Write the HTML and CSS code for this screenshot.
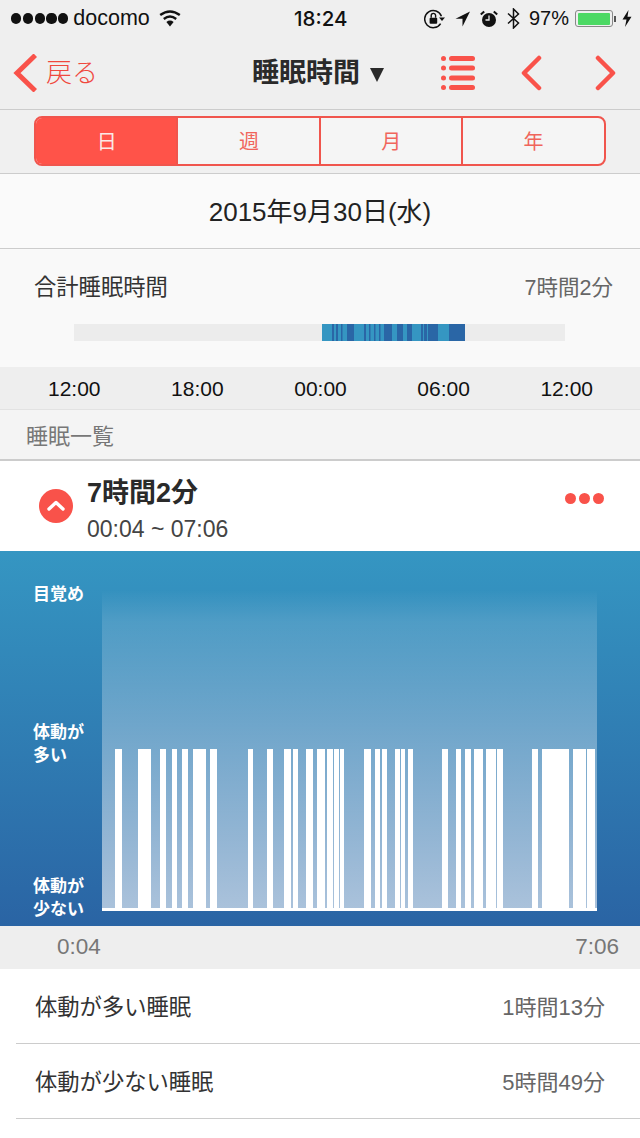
FILE: index.html
```html
<!DOCTYPE html>
<html lang="ja">
<head>
    <meta charset="UTF-8">
    <meta name="viewport" content="width=device-width, initial-scale=1.0">
    <title>睡眠時間</title>
    <link rel="stylesheet" href="styles.css">
</head>
<body>
    <div class="status-bar">
        <div class="status-left">
            <span class="signal"><i></i><i></i><i></i><i></i><i></i></span>
            <span class="carrier">docomo</span>
            <svg class="wifi" width="22" height="17" viewBox="0 0 22 17">
                <path d="M11 16.5 7.4 12Q11 9.2 14.6 12Z" fill="#111"/>
                <path d="M4.8 9Q11 4.2 17.2 9" fill="none" stroke="#111" stroke-width="2.4"/>
                <path d="M1.2 5Q11 -2.2 20.8 5" fill="none" stroke="#111" stroke-width="2.4"/>
            </svg>
        </div>
        <div class="status-time">18:24</div>
        <div class="status-right">
            <svg width="21" height="20" viewBox="0 0 21 20">
                <path d="M16.6 14.6A8.6 8.6 0 1 1 17.4 7.2" fill="none" stroke="#111" stroke-width="1.5"/>
                <path d="M15 8.6H21L18 12Z" fill="#111"/>
                <rect x="5.6" y="8.8" width="7.6" height="6" rx="1" fill="#111"/>
                <path d="M7.2 8.8V6.6A2.2 2.2 0 0 1 11.6 6.6V8.8" fill="none" stroke="#111" stroke-width="1.4"/>
            </svg>
            <svg class="gap-arrow" width="15" height="16" viewBox="0 0 15 16">
                <path d="M15 0.5 0.5 7.8H7.5V15.5Z" fill="#111"/>
            </svg>
            <svg class="gap-alarm" width="18" height="18" viewBox="0 0 18 18">
                <circle cx="9" cy="10" r="7" fill="#111"/>
                <path d="M9 5.5V10H5.5" fill="none" stroke="#efefef" stroke-width="1.3"/>
                <path d="M0.8 4.6 4.2 1.4M17.2 4.6 13.8 1.4" stroke="#111" stroke-width="2"/>
            </svg>
            <svg class="gap-bt" width="13" height="21" viewBox="0 0 13 21">
                <path d="M1 5.5 11.5 15 6.5 20V1L11.5 6 1 15.5" fill="none" stroke="#111" stroke-width="1.5"/>
            </svg>
            <span class="battery-pct">97%</span>
            <span class="battery"><span class="battery-fill"></span></span>
            <span class="battery-cap"></span>
            <svg class="gap-bolt" width="10" height="17" viewBox="0 0 10 17">
                <path d="M6.5 0 0.5 9.5H4.5L3 17 9.5 6.8H5.5Z" fill="#111"/>
            </svg>
        </div>
    </div>

    <div class="nav-bar">
        <div class="nav-back">
            <svg width="24" height="38" viewBox="0 0 24 38">
                <path d="M20.5 3 4 19 20.5 35" fill="none" stroke="#f9524a" stroke-width="5" stroke-linecap="square"/>
            </svg>
            <span>戻る</span>
        </div>
        <div class="nav-title"><span class="nav-title-text">睡眠時間</span><span class="nav-caret"></span></div>
        <div class="nav-actions">
            <svg width="36" height="36" viewBox="0 0 36 36">
                <g fill="#f9524a">
                    <circle cx="3.5" cy="3.5" r="2.5"/><rect x="9" y="1" width="26" height="5" rx="2.5"/>
                    <circle cx="3.5" cy="13" r="2.5"/><rect x="9" y="10.5" width="26" height="5" rx="2.5"/>
                    <circle cx="3.5" cy="23" r="2.5"/><rect x="9" y="20.5" width="26" height="5" rx="2.5"/>
                    <circle cx="3.5" cy="32.5" r="2.5"/><rect x="9" y="30" width="26" height="5" rx="2.5"/>
                </g>
            </svg>
            <svg class="nav-prev" width="22" height="36" viewBox="0 0 22 36">
                <path d="M18 3 3 18 18 33" fill="none" stroke="#f9524a" stroke-width="4.5" stroke-linecap="round" stroke-linejoin="round"/>
            </svg>
            <svg class="nav-next" width="22" height="36" viewBox="0 0 22 36">
                <path d="M4 3 19 18 4 33" fill="none" stroke="#f9524a" stroke-width="4.5" stroke-linecap="round" stroke-linejoin="round"/>
            </svg>
        </div>
    </div>

    <div class="segment-wrap">
        <div class="segment">
            <div class="segment-item active">日</div>
            <div class="segment-item">週</div>
            <div class="segment-item">月</div>
            <div class="segment-item">年</div>
        </div>
    </div>

    <div class="date-row">2015年9月30日(水)</div>

    <div class="total">
        <div class="total-head">
            <span>合計睡眠時間</span>
            <span class="total-value">7時間2分</span>
        </div>
        <svg class="total-bar" width="491" height="17" viewBox="0 0 491 17">
            <rect width="491" height="17" fill="#ececec"/>
            <rect x="248" width="143" height="17" fill="#3596c2"/>
            <g fill="#2a66a6">
                <rect x="258" width="2" height="17"/>
                <rect x="262" width="2" height="17"/>
                <rect x="267" width="1.5" height="17"/>
                <rect x="273" width="7" height="17"/>
                <rect x="290" width="2" height="17"/>
                <rect x="295" width="1.5" height="17"/>
                <rect x="300" width="1.5" height="17"/>
                <rect x="305" width="1.5" height="17"/>
                <rect x="310" width="8" height="17"/>
                <rect x="323" width="6" height="17"/>
                <rect x="333" width="5" height="17"/>
                <rect x="347" width="2" height="17"/>
                <rect x="350" width="3" height="17"/>
                <rect x="354" width="10" height="17"/>
                <rect x="375" width="16" height="17"/>
            </g>
        </svg>
    </div>

    <div class="time-axis">
        <span>12:00</span>
        <span>18:00</span>
        <span>00:00</span>
        <span>06:00</span>
        <span>12:00</span>
    </div>

    <div class="section-title">睡眠一覧</div>

    <div class="summary">
        <svg class="summary-toggle" width="34" height="34" viewBox="0 0 34 34">
            <circle cx="17" cy="17" r="17" fill="#f9524a"/>
            <path d="M10 20 17 13.5 24 20" fill="none" stroke="#fff" stroke-width="3.4" stroke-linecap="round" stroke-linejoin="round"/>
        </svg>
        <div class="summary-text">
            <div class="summary-title">7時間2分</div>
            <div class="summary-range">00:04 ~ 07:06</div>
        </div>
        <div class="summary-more"><i></i><i></i><i></i></div>
    </div>

    <div class="chart">
        <div class="chart-labels">
            <div>目覚め</div>
            <div class="chart-label-mid">体動が<br>多い</div>
            <div>体動が<br>少ない</div>
        </div>
        <svg class="chart-plot" width="495" height="321" viewBox="0 0 495 321">
            <defs>
                <linearGradient id="plot-fade" x1="0" y1="0" x2="0" y2="1">
                    <stop offset="0" stop-color="#fff" stop-opacity="0"/>
                    <stop offset="0.1" stop-color="#fff" stop-opacity="0.14"/>
                    <stop offset="1" stop-color="#fff" stop-opacity="0.6"/>
                </linearGradient>
            </defs>
            <rect width="495" height="318" fill="url(#plot-fade)"/>
            <rect y="318" width="495" height="3" fill="#fff"/>
            <g fill="#fff" id="bars"></g>
        </svg>
    </div>

    <div class="chart-axis">
        <span>0:04</span>
        <span>7:06</span>
    </div>

    <div class="detail-list">
        <div class="detail-row">
            <span>体動が多い睡眠</span>
            <span class="detail-value">1時間13分</span>
        </div>
        <div class="detail-row">
            <span>体動が少ない睡眠</span>
            <span class="detail-value">5時間49分</span>
        </div>
    </div>

    <script>
        // [x, width] in screen px, plot starts at x = 102
        var bars = [[115,7],[138,13],[160,6],[172,5],[182,6],[193,13],[210,7],[248,5],[267,6],[284,7],[293,5],[306,7],[317,8],[327,6],[334,5],[340,4],[364,7],[375,5],[382,5],[395,5],[401,4],[408,5],[442,6],[456,5],[465,6],[474,9],[486,10],[497,6],[532,6],[542,27],[573,13],[587,8]]
        var html = ''
        for (var i = 0; i < bars.length; i++) {
            html += '<rect x="' + (bars[i][0] - 102) + '" y="159" width="' + bars[i][1] + '" height="162"/>'
        }
        document.getElementById('bars').innerHTML = html
    </script>
</body>
</html>
```

FILE: styles.css
```css
* {
    box-sizing: border-box;
}

body {
    margin: 0;
    background: #fff;
    color: #222;
    font-family: "Liberation Sans", "Noto Sans CJK JP", sans-serif;
    font-size: 22.3px;
    height: 1138px;
    overflow: hidden;
}

.status-bar {
    display: flex;
    align-items: center;
    justify-content: space-between;
    height: 37px;
    padding: 0 8px 0 11px;
    background: #efefef;
    color: #111;
    position: relative;
}

.status-left,
.status-right {
    display: flex;
    align-items: center;
}

.signal {
    display: flex;
    gap: 1.6px;
}

.signal i {
    display: block;
    width: 10.2px;
    height: 10.2px;
    border-radius: 50%;
    background: #111;
}

.carrier {
    margin-left: 5px;
    font-size: 21.5px;
}

.wifi {
    margin-left: 9px;
}

.status-time {
    position: absolute;
    left: 294px;
    font-family: Inter, "Liberation Sans", sans-serif;
    font-size: 20.5px;
    font-weight: 500;
}

.status-right {
    font-size: 20px;
}

.gap-arrow {
    margin-left: 10px;
}

.gap-alarm {
    margin-left: 10px;
}

.gap-bt {
    margin-left: 9px;
}

.battery-pct {
    margin-left: 9px;
}

.battery {
    display: block;
    margin-left: 6px;
    width: 38px;
    height: 17px;
    padding: 1.5px;
    border: 1px solid #888;
    border-radius: 3px;
}

.battery-fill {
    display: block;
    height: 100%;
    width: 97%;
    background: #4cd964;
    border-radius: 1px;
}

.battery-cap {
    display: block;
    width: 2px;
    height: 6px;
    margin-left: 1px;
    background: #555;
}

.gap-bolt {
    margin-left: 6px;
}

.nav-bar {
    display: flex;
    align-items: center;
    height: 73px;
    background: #efefef;
    border-bottom: 1px solid #ccc;
}

.nav-back {
    display: flex;
    align-items: center;
    width: 252px;
    padding-left: 13px;
    color: #f0483e;
    font-size: 26px;
    font-weight: 300;
}

.nav-back span {
    margin-left: 9px;
    padding-bottom: 6px;
}

.nav-title {
    display: flex;
    align-items: center;
    font-size: 27px;
    font-weight: bold;
    color: #2a2a2a;
}

.nav-title-text {
    padding-bottom: 6px;
}

.nav-caret {
    margin: 3px 0 0 10px;
    border-top: 14px solid #2a2a2a;
    border-left: 7px solid transparent;
    border-right: 7px solid transparent;
}

.nav-actions {
    display: flex;
    align-items: center;
    margin-left: auto;
    padding-right: 24px;
}

.nav-prev {
    margin-left: 45px;
}

.nav-next {
    margin-left: 51px;
}

.segment-wrap {
    height: 64px;
    padding: 6px 34px 0;
    background: #f0f0f0;
    border-bottom: 1px solid #ccc;
}

.segment {
    display: flex;
    height: 50px;
    border: 2px solid #f0554d;
    border-radius: 8px;
    overflow: hidden;
    background: #f5f5f5;
}

.segment-item {
    flex: 1;
    display: flex;
    align-items: center;
    justify-content: center;
    margin-left: -1px;
    padding-bottom: 2px;
    border-left: 2px solid #f0554d;
    color: #f0655c;
    font-size: 20px;
}

.segment-item:first-child {
    margin-left: 0;
    border-left: 0;
}

.segment-item.active {
    background: #ff5349;
    color: #fbe9e6;
}

.date-row {
    display: flex;
    align-items: center;
    justify-content: center;
    height: 75px;
    padding-bottom: 4px;
    background: #fafafa;
    border-bottom: 1px solid #ccc;
    font-size: 26px;
    color: #222;
}

.total {
    height: 118px;
    padding: 18px 27px 0 34px;
    background: #f9f9f9;
}

.total-head {
    display: flex;
    justify-content: space-between;
    align-items: center;
    height: 36px;
    color: #333;
}

.total-value {
    color: #666;
    font-size: 21.5px;
}

.total-bar {
    display: block;
    margin: 21px 0 0 40px;
}

.time-axis {
    display: flex;
    justify-content: space-between;
    align-items: center;
    height: 43px;
    padding: 2px 47px 0 48px;
    background: #eee;
    border-bottom: 1px solid #e2e2e2;
    font-size: 21px;
    color: #111;
}

.section-title {
    display: flex;
    align-items: center;
    height: 51px;
    padding: 0 0 2px 26px;
    background: #f4f4f4;
    border-bottom: 2px solid #ccc;
    color: #777;
    font-size: 22px;
}

.summary {
    display: flex;
    align-items: center;
    height: 90px;
    padding: 0 36px 0 39px;
    background: #fff;
}

.summary-toggle {
    margin-top: -1px;
}

.summary-text {
    margin-left: 14px;
    padding-top: 7px;
}

.summary-title {
    font-size: 27px;
    font-weight: bold;
    line-height: 36px;
    color: #2a2a2a;
}

.summary-range {
    margin-top: 3px;
    font-size: 23px;
    line-height: 30px;
    color: #444;
}

.summary-more {
    display: flex;
    gap: 3px;
    margin: -16px 0 0 auto;
}

.summary-more i {
    display: block;
    width: 11px;
    height: 11px;
    border-radius: 50%;
    background: #f9524a;
}

.chart {
    display: flex;
    align-items: flex-end;
    height: 375px;
    padding: 0 0 15px 33px;
    background: linear-gradient(#3596c2, #2a64a4);
}

.chart-labels {
    display: flex;
    flex-direction: column;
    justify-content: space-between;
    width: 69px;
    height: 338px;
    margin-bottom: -10px;
    color: #fff;
    font-size: 17px;
    font-weight: bold;
    line-height: 23px;
}

.chart-label-mid {
    margin-top: 6px;
}

.chart-plot {
    display: block;
}

.chart-axis {
    display: flex;
    justify-content: space-between;
    align-items: center;
    height: 43px;
    padding: 0 21px 2px 57px;
    background: #eee;
    color: #777;
    font-size: 22.5px;
}

.detail-list {
    background: #fff;
    padding-left: 16px;
}

.detail-row {
    display: flex;
    justify-content: space-between;
    align-items: center;
    height: 75px;
    padding: 0 35px 3px 19px;
    border-bottom: 1px solid #ccc;
    color: #333;
}

.detail-value {
    color: #666;
    font-size: 22px;
}
```
